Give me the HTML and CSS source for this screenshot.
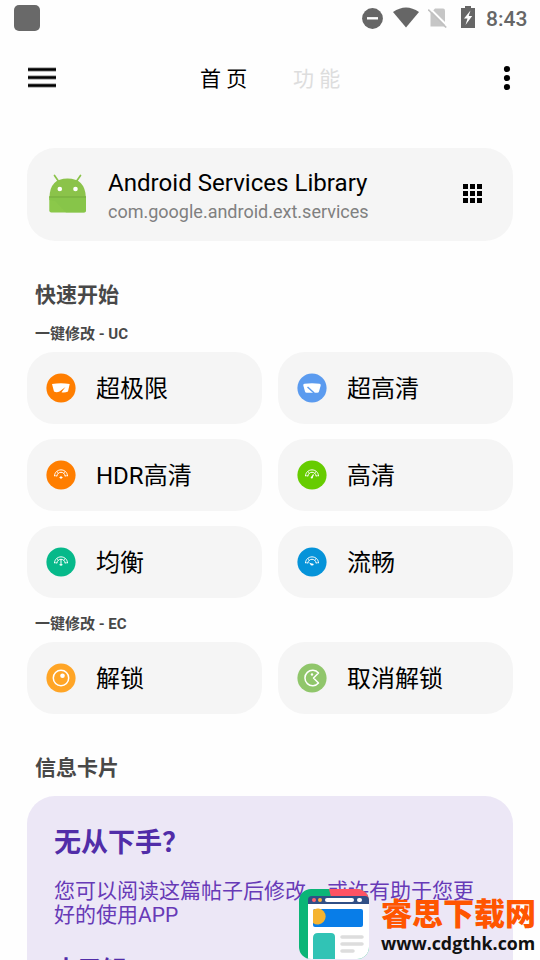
FILE: index.html
```html
<!DOCTYPE html>
<html lang="zh-CN">
<head>
<meta charset="utf-8">
<title>首页</title>
<link rel="stylesheet" href="styles.css">
</head>
<body>
<svg class="defs" width="0" height="0" aria-hidden="true">
  <symbol id="gauge" viewBox="0 0 30 30">
    <g fill="none" stroke="#fff" stroke-linecap="round">
      <path d="M8.500 15.700C9 7.800 21 7.800 21.500 15.700" stroke-width="1"/>
      <path d="M10.800 16C11.500 10.900 18.500 10.900 19.200 16" stroke-width="1"/>
      <path d="M8.500 15.800H10.800M19.200 15.800H21.500M11 11.500L12 13.300M19 11.500L18 13.300" stroke-width=".7"/>
    </g>
  </symbol>
</svg>
<div class="screen">
  <header class="status">
    <span class="app-square"></span>
    <svg class="dnd" width="21" height="21" viewBox="0 0 21 21"><circle cx="10.500" cy="10.500" r="10.400" fill="#666"/><path d="M5 10.300H16" stroke="#fff" stroke-width="2.400"/></svg>
    <svg class="wifi" width="26" height="21" viewBox="0 0 26 21"><path d="M0 5Q13-4 26 5L13 20.500Z" fill="#666"/></svg>
    <svg class="sim" width="20" height="20" viewBox="0 0 20 20"><path d="M7 .5H15Q17 .5 17 2.500V18.500H2.500V5.500Z" fill="#c6c6c6"/><path d="M1.500 0L20 18.500" stroke="#fff" stroke-width="2"/><path d="M.2 1.500L18.200 19.500" stroke="#c2c2c2" stroke-width="1.700"/></svg>
    <svg class="battery" width="14" height="22" viewBox="0 0 14 22"><path d="M4 0H10V2H14V22H0V2H4Z" fill="#666"/><path d="M9.500 4.500L3 12.500H6.500L4.500 19L11.200 10H7.700Z" fill="#fff"/></svg>
    <span class="clock">8:43</span>
  </header>
  <nav class="bar">
    <svg class="menu" width="28" height="22" viewBox="0 0 28 22"><path d="M0 2.500H28M0 10.500H28M0 18.500H28" stroke="#aaa" stroke-width="4.600"/><path d="M0 2.500H28M0 10.500H28M0 18.500H28" stroke="#000" stroke-width="2.600"/></svg>
    <span class="tab active">首 页</span>
    <span class="tab">功 能</span>
    <svg class="more" width="8" height="26" viewBox="0 0 8 26"><circle cx="4" cy="4" r="3.100"/><circle cx="4" cy="13" r="3.100"/><circle cx="4" cy="22" r="3.100"/></svg>
  </nav>
  <section class="app-card">
    <svg class="droid" width="38" height="40" viewBox="0 0 38 40">
      <path d="M5.500 1.500L10 8M31.500 1.500L27 8" stroke="#8bc34a" stroke-width="1.700" stroke-linecap="round"/>
      <path d="M.5 23Q1 4.500 18.500 4.500T36.800 23Z" fill="#8bc34a"/>
      <path d="M.3 22.500H37V36.500Q37 38.500 35 38.500H2.300Q.3 38.500.3 36.500Z" fill="#8bc84a"/>
      <path d="M6 27L17 38.500H35Q37 38.500 37 36.500V22.500H0V26Z" fill="#86c348" opacity=".65"/>
      <path d="M.3 23H37" stroke="#75a93d" stroke-width="1"/>
      <circle cx="10.800" cy="15" r="2.300" fill="#fff"/><circle cx="26.500" cy="15" r="2.300" fill="#fff"/>
    </svg>
    <div class="app-text"><div class="app-name">Android Services Library</div><div class="package">com.google.android.ext.services</div></div>
    <svg class="apps" width="19" height="19" viewBox="0 0 19 19"><path d="M0 0H5V5H0ZM7 0H12V5H7ZM14 0H19V5H14ZM0 7H5V12H0ZM7 7H12V12H7ZM14 7H19V12H14ZM0 14H5V19H0ZM7 14H12V19H7ZM14 14H19V19H14Z"/></svg>
  </section>
  <h2>快速开始</h2>
  <h3>一键修改 - UC</h3>
  <div class="grid">
    <div class="action"><svg viewBox="0 0 30 30"><circle cx="15" cy="15" r="14.600" fill="#ff7e00"/><path d="M6 11Q15 9.500 23.700 11L22 18.500Q19 20 15.500 19.300L19.500 14L13.500 18.500Q10.500 20 8 18.500Z" fill="#fff"/></svg><span>超极限</span></div>
    <div class="action"><svg viewBox="0 0 30 30"><circle cx="15" cy="15" r="14.600" fill="#5b9bef"/><path d="M7.500 10.800Q15 9.800 22.500 10.800Q24 11 23.700 12.500L22 18.500Q21.700 19.700 20.200 19.700H9.800Q8.300 19.700 8 18.500L6.300 12.500Q6 11 7.500 10.800Z" fill="#fff"/><path d="M10.500 14L17.200 20" stroke="#5b9bef" stroke-width="1.500"/></svg><span>超高清</span></div>
    <div class="action"><svg viewBox="0 0 30 30"><circle cx="15" cy="15" r="14.600" fill="#ff7e00"/><use href="#gauge"/><path d="M15 16V19M13.500 17.500H16.500" stroke="#fff"/></svg><span>HDR高清</span></div>
    <div class="action"><svg viewBox="0 0 30 30"><circle cx="15" cy="15" r="14.600" fill="#6c0"/><use href="#gauge"/><path d="M16.500 14.500L14.800 17.500" stroke="#fff" stroke-width="1.300"/><circle cx="14.800" cy="17.500" r="1.100" fill="#fff"/></svg><span>高清</span></div>
    <div class="action"><svg viewBox="0 0 30 30"><circle cx="15" cy="15" r="14.600" fill="#06b98a"/><use href="#gauge"/><path d="M15 12V19M13.500 17.700H16.500" stroke="#fff"/></svg><span>均衡</span></div>
    <div class="action"><svg viewBox="0 0 30 30"><circle cx="15" cy="15" r="14.600" fill="#0593d9"/><use href="#gauge"/><path d="M12.500 16L15 17.500" stroke="#fff"/><ellipse cx="15" cy="17.500" rx="1.700" ry="1" fill="#fff"/></svg><span>流畅</span></div>
  </div>
  <h3 class="ec">一键修改 - EC</h3>
  <div class="grid">
    <div class="action"><svg viewBox="0 0 30 30"><circle cx="15" cy="15" r="14.600" fill="#ffa526"/><circle cx="15" cy="15" r="7.700" fill="none" stroke="#fff" stroke-width="1.500"/><circle cx="16.500" cy="12.700" r="2.300" fill="#fff"/></svg><span>解锁</span></div>
    <div class="action"><svg viewBox="0 0 30 30"><circle cx="15" cy="15" r="14.600" fill="#90c66b"/><path d="M21.500 10A7.700 7.700 0 1 0 21.500 20L16.500 15Z" fill="none" stroke="#fff" stroke-width="1.500" stroke-linejoin="round"/><circle cx="15" cy="11.500" r="1.200" fill="#fff"/></svg><span>取消解锁</span></div>
  </div>
  <h2>信息卡片</h2>
  <article class="info">
    <h4>无从下手？</h4>
    <p>您可以阅读这篇帖子后修改，或许有助于您更好的使用APP</p>
    <div class="learn">去了解</div>
  </article>
  <aside class="mark">
    <svg width="70" height="70" viewBox="0 0 70 70">
      <defs><clipPath id="logo-clip"><rect width="70" height="70" rx="12"/></clipPath></defs>
      <g clip-path="url(#logo-clip)">
        <path d="M0 0H70V70H0Z" fill="#0bb577"/><path d="M30 0H70V20H35Z" fill="#ff5264"/>
        <path d="M9 15H70V70H9Z" fill="#fff"/><path d="M9 15V11Q9 7 13 7H66Q70 7 70 11V15Z" fill="#304f86"/>
        <circle cx="15" cy="11" r="2" fill="#ff6170"/><circle cx="21" cy="11" r="2" fill="#fbb43c"/><rect x="26" y="9" width="29" height="4" rx="2" fill="#fff"/><rect x="58" y="9" width="5" height="4" rx="2" fill="#fff"/>
        <rect x="14" y="20" width="50" height="18" rx="2" fill="#087de8"/><path d="M14 21V34A8 8 0 1 0 14 21Z" fill="#f5b32f"/>
        <path d="M14 70V49Q14 44 19 44H32Q36 44 36 48V70Z" fill="#31c3b5"/>
        <path d="M43 48H63M43 55H63M43 62H54" stroke="#ddd" stroke-width="3.500" stroke-linecap="round"/>
      </g>
    </svg>
    <div class="mark-text"><div class="mark-name">睿思下载网</div><div class="mark-url">www.cdgthk.com</div></div>
  </aside>
</div>
</body>
</html>
```
FILE: styles.css
```css
* { box-sizing: border-box; }
body { margin: 0; background: #fefefe; color: #000; font-family: Roboto, "Noto Sans CJK SC", sans-serif; }
.defs { position: absolute; }
.screen { position: relative; height: 960px; overflow: hidden; padding: 0 27px; }
svg { display: block; flex: none; }
.status { display: flex; align-items: center; height: 36px; margin: 0 -16px 0 -13px; }
.app-square { width: 26px; height: 26px; border-radius: 5px; background: #696969; margin-right: auto; }
.dnd { margin-right: 10px; }
.wifi { margin-right: 9px; margin-top: -2px; }
.sim { margin-right: 13px; }
.battery { margin-right: 11px; margin-top: -2px; }
.clock { width: 43px; font-size: 21px; font-weight: 500; color: #666; line-height: 24px; white-space: nowrap; padding-top: 2px; }
.bar { display: flex; align-items: center; height: 84px; padding: 0 2px 0 1px; }
.menu { margin-right: 144px; }
.tab { width: 93px; padding-top: 2px; font-size: 21px; line-height: 30px; color: #ddd; white-space: nowrap; }
.tab.active { color: #000; }
.more { margin-left: auto; }
.app-card { display: flex; align-items: center; height: 93px; margin-top: 28px; padding: 0 31px 2px 22px; background: #f5f5f5; border-radius: 28px; }
.app-text { margin-left: 21px; padding-top: 6px; }
.app-name { font-size: 24.1px; line-height: 30px; white-space: nowrap; }
.package { font-size: 18px; line-height: 28px; color: #808080; white-space: nowrap; }
.apps { margin-left: auto; }
h2, h3, h4, p { margin: 0; }
h2 { margin-top: 40px; padding-left: 8px; font-size: 21px; font-weight: 700; line-height: 28px; color: #484848; }
h3 { margin: 15px 0 8px; padding-left: 8px; font-size: 15px; font-weight: 700; line-height: 20px; color: #484848; }
.ec { margin-top: 16px; }
.grid { display: grid; grid-template-columns: 1fr 1fr; grid-auto-rows: 72px; gap: 15px 16px; }
.action { display: flex; align-items: center; padding-left: 19.4px; background: #f5f5f5; border-radius: 27px; font-size: 24px; line-height: 36px; white-space: nowrap; }
.action svg { width: 30px; height: 30px; margin: 0 19.6px 1px 0; }
.action span { padding-top: 2px; }
.info { height: 200px; margin-top: 14px; padding: 29px 27px 0; background: #ece7f6; border-radius: 28px; color: #512da8; }
.info h4 { font-size: 27px; font-weight: 700; line-height: 36px; }
.info p { margin-top: 18px; color: #673ab7; font-size: 21px; line-height: 24px; }
.learn { margin-top: 25px; font-size: 24px; font-weight: 700; line-height: 36px; }
.mark { position: absolute; left: 299px; top: 889px; display: flex; }
.mark-text { margin-left: 12px; }
.mark-name { font-size: 31px; line-height: 42px; font-weight: 900; color: #ff5500; white-space: nowrap; margin-top: 5px; }
.mark-url { font-family: "Open Sans", sans-serif; font-size: 17.8px; font-weight: 700; line-height: 20px; margin-top: -3px; color: #111; white-space: nowrap; }
```
